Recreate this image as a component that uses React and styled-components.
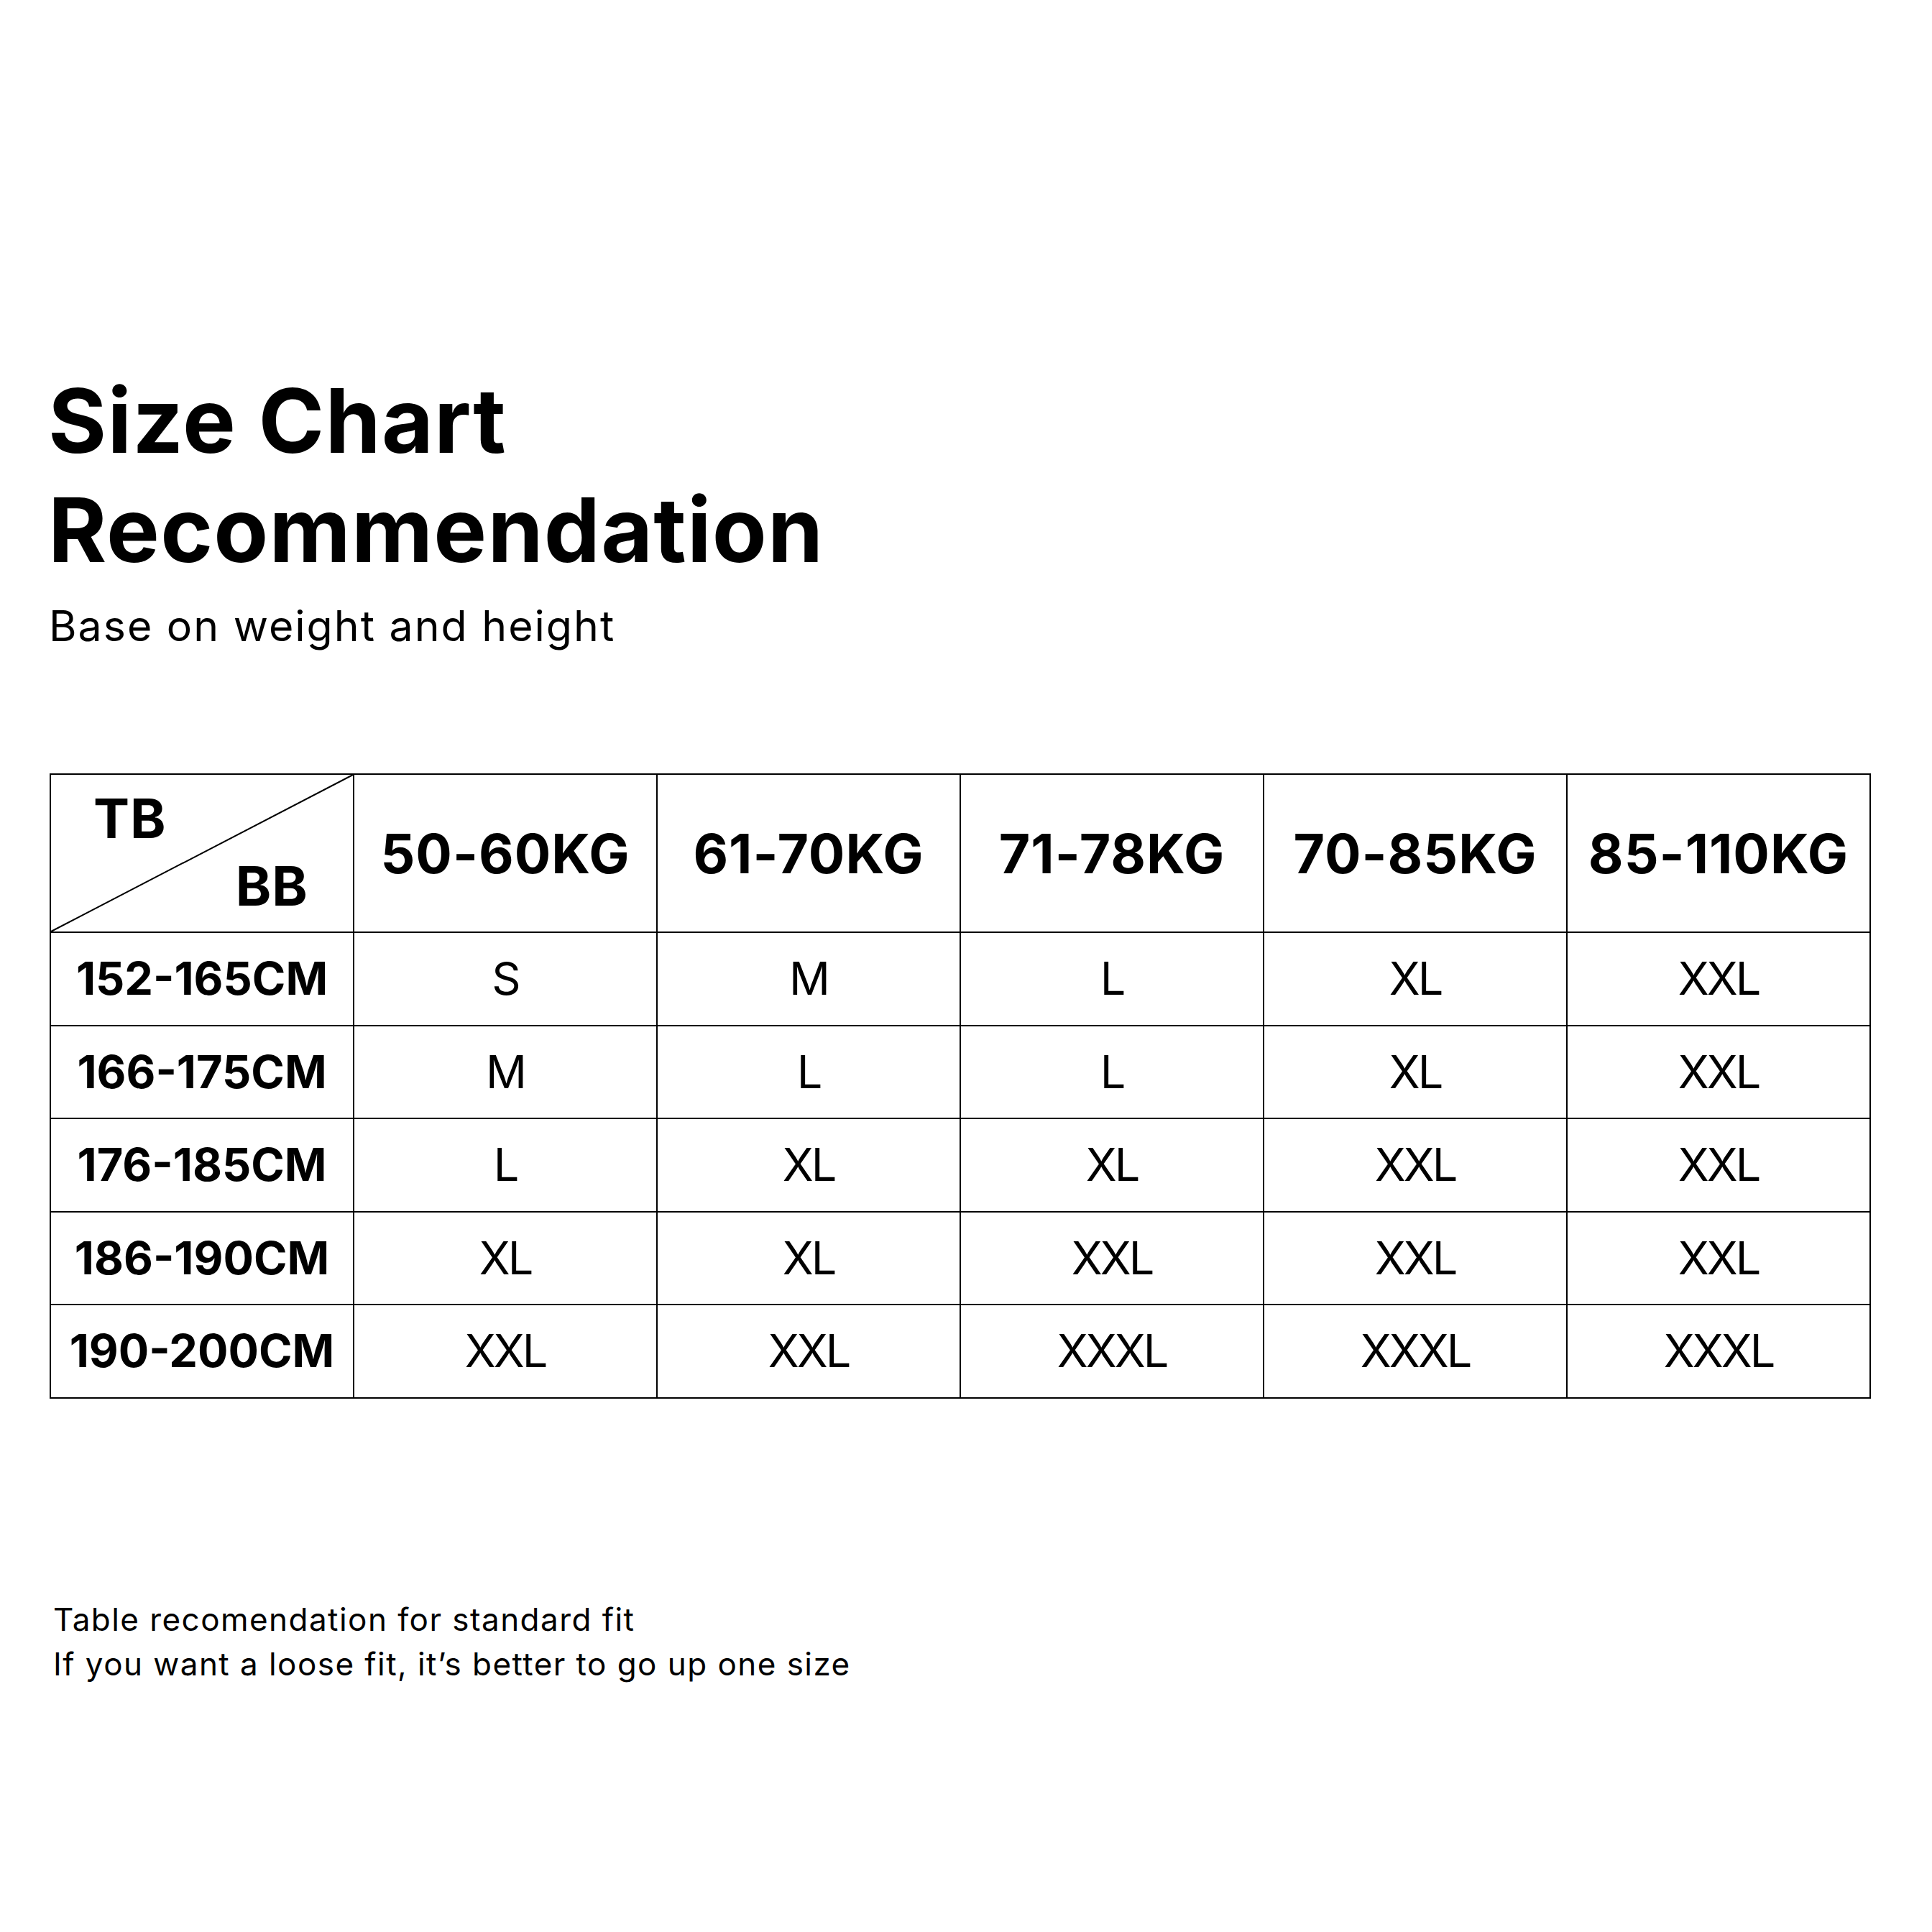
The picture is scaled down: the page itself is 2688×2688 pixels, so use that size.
import React from "react";
import styled, { createGlobalStyle } from "styled-components";

const GlobalStyle = createGlobalStyle`
  html, body { margin: 0; padding: 0; background: #ffffff; }
  body { font-family: Inter, "Liberation Sans", Arial, sans-serif; color: #000000; }
  * { box-sizing: border-box; }
`;

const Page = styled.main`
  width: 2688px;
  min-height: 2688px;
  padding: 509px 86px 0 69px;
  background: #ffffff;
`;

const Title = styled.h1`
  margin: 0 0 0 -2px;
  font-family: Inter, "Liberation Sans", sans-serif;
  font-weight: 700;
  font-size: 124px;
  line-height: 152px;
  letter-spacing: 1.2px;
`;

const Subtitle = styled.p`
  margin: 22px 0 0 -1px;
  font-family: Inter, "Liberation Sans", sans-serif;
  font-weight: 400;
  font-size: 59px;
  line-height: 72px;
  letter-spacing: 2px;
`;

const Grid = styled.div`
  margin-top: 169px;
  display: grid;
  grid-template-columns: repeat(6, 422px);
  grid-template-rows: 220px repeat(5, 129.5px);
  width: max-content;
  border-left: 2px solid #000;
  border-top: 2px solid #000;
`;

const Cell = styled.div`
  position: relative;
  display: flex;
  align-items: center;
  justify-content: center;
  border-right: 2px solid #000;
  border-bottom: 2px solid #000;
  font-family: Inter, "Liberation Sans", sans-serif;
  font-weight: ${(p) => (p.$bold ? 700 : 400)};
  font-size: ${(p) => p.$size}px;
  letter-spacing: ${(p) => p.$spacing || 0}px;
  line-height: 1;
  white-space: nowrap;
`;

const Corner = styled.div`
  position: relative;
  display: flex;
  flex-direction: column;
  justify-content: space-between;
  padding: 23px 62px 26px 59px;
  border-right: 2px solid #000;
  border-bottom: 2px solid #000;
  font-family: Inter, "Liberation Sans", sans-serif;
  font-weight: 700;
  font-size: 75px;
  line-height: 75px;
  letter-spacing: 1px;
`;

const CornerLabel = styled.span`
  align-self: ${(p) => (p.$end ? "flex-end" : "flex-start")};
  position: relative;
  z-index: 1;
`;

const Diagonal = styled.svg`
  position: absolute;
  inset: 0;
  width: 100%;
  height: 100%;
  overflow: visible;
`;

const Footer = styled.div`
  margin-top: 276px;
  margin-left: 5px;
  font-family: Inter, "Liberation Sans", sans-serif;
  font-weight: 400;
  font-size: 44px;
  line-height: 62px;
  letter-spacing: 1.45px;
`;

const FooterLine = styled.p`
  margin: 0;
`;

const weights = ["50-60KG", "61-70KG", "71-78KG", "70-85KG", "85-110KG"];
const rows = [
  ["152-165CM", ["S", "M", "L", "XL", "XXL"]],
  ["166-175CM", ["M", "L", "L", "XL", "XXL"]],
  ["176-185CM", ["L", "XL", "XL", "XXL", "XXL"]],
  ["186-190CM", ["XL", "XL", "XXL", "XXL", "XXL"]],
  ["190-200CM", ["XXL", "XXL", "XXXL", "XXXL", "XXXL"]],
];

export default function App() {
  return (
    <>
      <GlobalStyle />
      <Page>
        <Title>
          Size Chart
          <br />
          Recommendation
        </Title>
        <Subtitle>Base on weight and height</Subtitle>
        <Grid>
          <Corner>
            <Diagonal viewBox="0 0 100 100" preserveAspectRatio="none" aria-hidden="true">
              <line x1="0" y1="100" x2="100" y2="0" stroke="#000" strokeWidth="2" vectorEffect="non-scaling-stroke" />
            </Diagonal>
            <CornerLabel>TB</CornerLabel>
            <CornerLabel $end>BB</CornerLabel>
          </Corner>
          {weights.map((w) => (
            <Cell key={w} $bold $size={75} $spacing={1}>
              {w}
            </Cell>
          ))}
          {rows.map(([h, sizes]) => (
            <React.Fragment key={h}>
              <Cell $bold $size={63}>
                {h}
              </Cell>
              {sizes.map((s, i) => (
                <Cell key={i} $size={63} $spacing={-3}>
                  {s}
                </Cell>
              ))}
            </React.Fragment>
          ))}
        </Grid>
        <Footer>
          <FooterLine>Table recomendation for standard fit</FooterLine>
          <FooterLine>If you want a loose fit, it’s better to go up one size</FooterLine>
        </Footer>
      </Page>
    </>
  );
}
